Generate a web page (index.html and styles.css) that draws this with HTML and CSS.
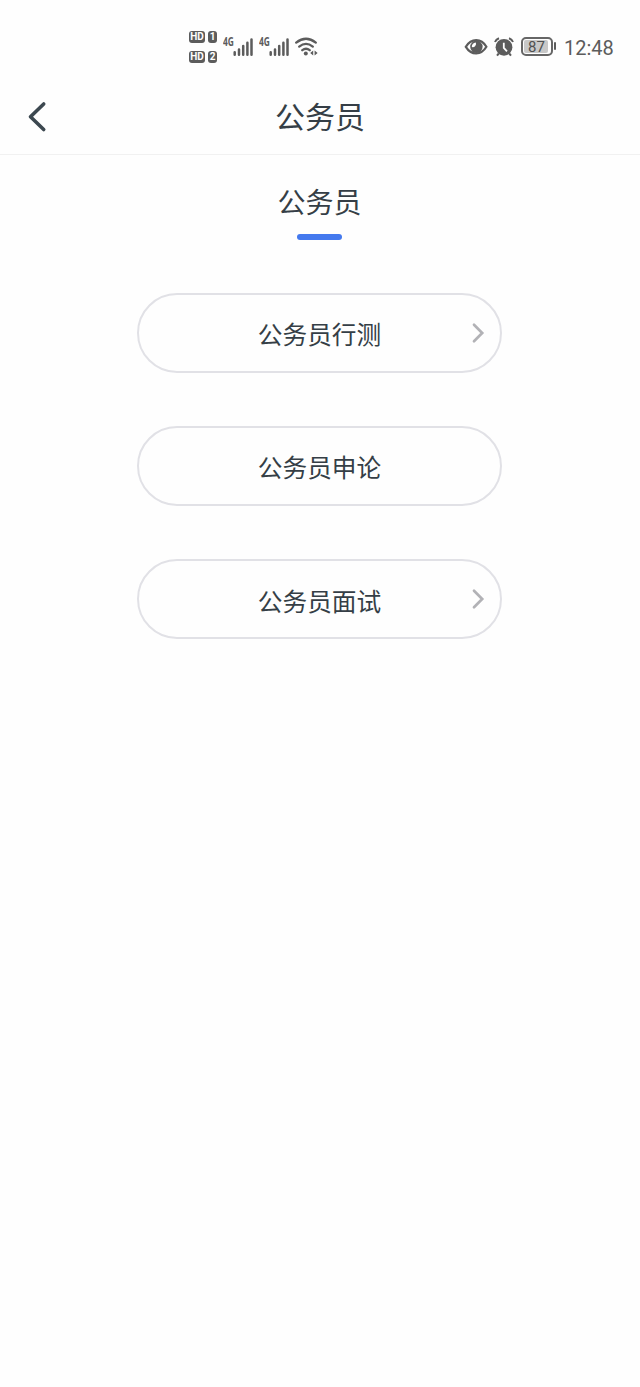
FILE: index.html
```html
<!DOCTYPE html>
<html lang="zh-CN">
<head>
<meta charset="UTF-8">
<meta name="viewport" content="width=device-width, initial-scale=1.0">
<title>公务员</title>
<link rel="stylesheet" href="styles.css">
</head>
<body>
<div class="status-bar">
  <div class="status-left">
    <div class="hd-list">
      <div class="hd-row"><span class="hd">HD</span><span class="sim">1</span></div>
      <div class="hd-row"><span class="hd">HD</span><span class="sim">2</span></div>
    </div>
    <div class="signal">
      <span class="net">4G</span>
      <svg class="bars" width="20" height="18" viewBox="0 0 20 18">
        <path d="M1.7 14.3v2.4M6 11.5v5.2M10.2 8v8.7M14.4 4.8v11.9M18.5 1.5v15.2"/>
      </svg>
    </div>
    <div class="signal">
      <span class="net">4G</span>
      <svg class="bars" width="20" height="18" viewBox="0 0 20 18">
        <path d="M1.7 14.3v2.4M6 11.5v5.2M10.2 8v8.7M14.4 4.8v11.9M18.5 1.5v15.2"/>
      </svg>
    </div>
    <svg class="wifi" width="24" height="20" viewBox="0 0 24 20">
      <path class="wave" d="M1.2 5.6Q11 -2.2 20.8 5.6M4.2 9.6Q11 4.2 17.8 9.6M7.3 13.2Q11 10.2 14.7 13.2"/>
      <circle cx="10.8" cy="16.6" r="2"/>
      <path d="M18.2 13.6v5l-3-2.5zM19.6 13.6v5l3-2.5z"/>
    </svg>
  </div>
  <div class="status-right">
    <svg class="eye" width="24" height="18" viewBox="0 0 24 18">
      <path class="outline" d="M1.8 8.800C4.600 4.400 8 2.200 12.200 2.200S19.800 4.400 22.400 8.800C19.800 13.200 16.400 15.400 12.200 15.400S4.600 13.200 1.800 8.800z"/>
      <circle cx="12.400" cy="8.800" r="6.200"/>
      <path class="glint" d="M11.800 4.400a3.400 3.400 0 0 1-4 4.600a4.600 4.600 0 0 1 4-4.600z"/>
    </svg>
    <svg class="alarm" width="20" height="20" viewBox="0 0 20 20">
      <circle cx="10" cy="10.300" r="8.400"/>
      <path class="ears" d="M1 5Q2 2.400 5 1.200M19 5Q18 2.400 15 1.200M4.800 16.500l-1.800 2.100M15.200 16.500l1.800 2.100"/>
      <path class="hands" d="M9.800 5.800v5.200l3.200 3.300"/>
    </svg>
    <div class="battery"><span class="level">87</span></div>
    <span class="battery-tip"></span>
    <span class="time">12:48</span>
  </div>
</div>

<div class="header">
  <svg class="back" width="20" height="32" viewBox="0 0 20 32">
    <path d="M16.700 3L3.500 15.700l13.200 12.800"/>
  </svg>
  <h1>公务员</h1>
</div>

<div class="content">
  <h2>公务员</h2>
  <div class="underline"></div>
  <div class="list">
    <a class="item">公务员行测
      <svg class="arrow" width="14" height="22" viewBox="0 0 14 22"><path d="M3 2.800l8.200 8.200-8.200 8.200"/></svg>
    </a>
    <a class="item">公务员申论</a>
    <a class="item">公务员面试
      <svg class="arrow" width="14" height="22" viewBox="0 0 14 22"><path d="M3 2.800l8.200 8.200-8.200 8.200"/></svg>
    </a>
  </div>
</div>
</body>
</html>
```
FILE: styles.css
```css
body {
  margin: 0;
  min-height: 100vh;
  background-color: #fefefe;
  color: #353e46;
  font-family: "Noto Sans CJK SC", sans-serif;
}

svg {
  display: block;
  fill: none;
}

/* status bar */
.status-bar {
  display: flex;
  justify-content: space-between;
  height: 79px;
  padding: 0 26px 0 188px;
  box-sizing: border-box;
  color: #5c5c5c;
  font-family: Roboto, sans-serif;
}

.status-left,
.status-right {
  display: flex;
  align-items: flex-start;
}

.hd-list {
  display: flex;
  flex-direction: column;
  gap: 8px;
  margin: 31px 6px 0 1px;
}

.hd-row {
  display: flex;
  gap: 3px;
}

.hd,
.sim {
  width: 16px;
  height: 12px;
  border-radius: 3px;
  background-color: #5c5c5c;
  color: #fefefe;
  font-size: 10px;
  font-weight: bold;
  line-height: 12px;
  text-align: center;
}

.sim {
  width: 9px;
}

.signal {
  display: flex;
  width: 36px;
  margin-top: 37px;
}

.net {
  width: 10px;
  font-family: "Open Sans", sans-serif;
  font-size: 12px;
  font-weight: bold;
  line-height: 10px;
  transform: scaleX(0.7);
  transform-origin: left;
}

.bars {
  flex: none;
  margin-top: 1px;
  stroke: #5c5c5c;
  stroke-width: 2.5;
  stroke-linecap: round;
}

.wifi {
  margin-top: 37px;
  fill: #5c5c5c;
}

.wave {
  fill: none;
  stroke: #5c5c5c;
  stroke-width: 2.3;
  stroke-linecap: round;
}

.eye {
  margin: 38px 6px 0 0;
  fill: #5c5c5c;
}

.outline {
  fill: none;
  stroke: #5c5c5c;
  stroke-width: 2.2;
}

.glint {
  fill: #fefefe;
}

.alarm {
  margin: 37px 7px 0 0;
  fill: #5c5c5c;
}

.ears {
  fill: none;
  stroke: #5c5c5c;
  stroke-width: 2;
}

.hands {
  fill: none;
  stroke: #fefefe;
  stroke-width: 1.8;
}

.battery {
  width: 32px;
  height: 19px;
  margin-top: 37px;
  padding: 1px;
  box-sizing: border-box;
  border: 2px solid #666;
  border-radius: 5px;
}

.level {
  display: block;
  width: 23px;
  height: 13px;
  padding-left: 1px;
  border-radius: 2px;
  background-color: #c8c8c8;
  color: #505050;
  font-size: 15px;
  line-height: 14px;
  text-align: center;
}

.battery-tip {
  width: 2px;
  height: 8px;
  margin: 42px 8px 0 1px;
  border-radius: 1px;
  background-color: #5c5c5c;
}

.time {
  width: 50px;
  margin-top: 36px;
  font-size: 20px;
  line-height: 24px;
}

/* title bar */
.header {
  display: grid;
  grid-template-columns: 60px 1fr 60px;
  align-items: center;
  height: 76px;
  box-sizing: border-box;
  border-bottom: 1px solid #f1f1f1;
}

.back {
  margin-left: 27px;
  stroke: #3c4850;
  stroke-width: 3.6;
  stroke-linecap: round;
  stroke-linejoin: round;
}

h1,
h2 {
  margin: 0;
  font-weight: normal;
  text-align: center;
}

h1 {
  padding-bottom: 3px;
  font-size: 30px;
  line-height: 40px;
}

/* tab and buttons */
.content {
  display: flex;
  flex-direction: column;
  align-items: center;
  padding: 26px 1px 0 0;
}

h2 {
  font-size: 28px;
  line-height: 40px;
}

.underline {
  width: 45px;
  height: 6px;
  margin-top: 13px;
  border-radius: 3px;
  background-color: #4479ee;
}

.list {
  display: flex;
  flex-direction: column;
  gap: 53.4px;
  margin-top: 52.5px;
}

.item {
  display: grid;
  grid-template-columns: 1fr auto 1fr;
  align-items: center;
  width: 365px;
  height: 80px;
  padding: 1px 15px 0;
  box-sizing: border-box;
  border: 2px solid #e1e1e6;
  border-radius: 41px;
  font-size: 24.7px;
}

.item::before {
  content: "";
}

.arrow {
  justify-self: end;
  margin-top: -1px;
  stroke: #b2b2b6;
  stroke-width: 2.7;
  stroke-linecap: round;
}
```
